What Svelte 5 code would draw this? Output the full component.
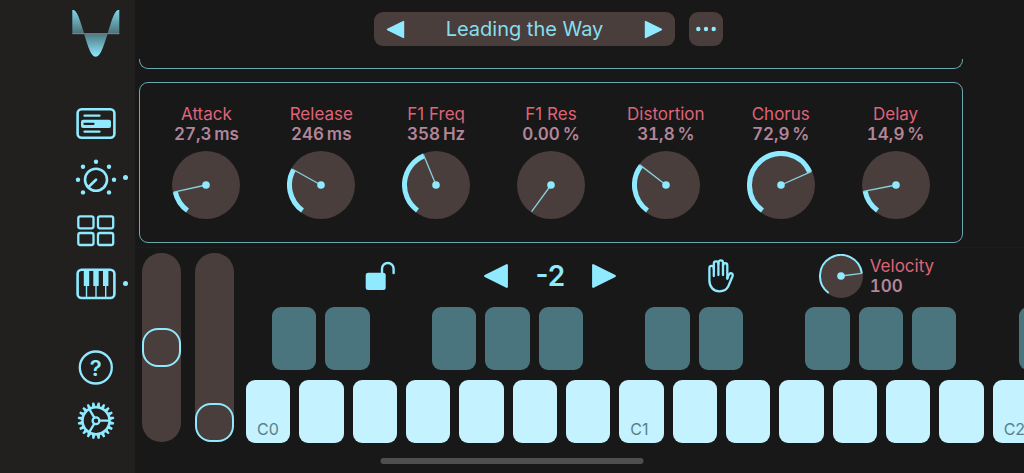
<script>
  let preset = $state('Leading the Way');
  let octave = $state(-2);
  let pitchBend = $state(50);
  let modWheel = $state(0);
  let velocity = $state(100);

  let knobs = $state([
    { name: 'Attack', value: '27,3', unit: 'ms', amount: 14.4 },
    { name: 'Release', value: '246', unit: 'ms', amount: 28.8 },
    { name: 'F1 Freq', value: '358', unit: 'Hz', amount: 42.2 },
    { name: 'F1 Res', value: '0.00', unit: '%', amount: 0 },
    { name: 'Distortion', value: '31,8', unit: '%', amount: 31.8 },
    { name: 'Chorus', value: '72,9', unit: '%', amount: 72.9 },
    { name: 'Delay', value: '14,9', unit: '%', amount: 14.9 }
  ]);

  const whiteKeys = Array.from({ length: 15 }, (_, i) => (i % 7 === 0 ? `C${i / 7}` : ''));
  // there is no black key after E and B
  const blackKeys = whiteKeys.map((_, i) => i % 7 !== 2 && i % 7 !== 6);
  const teeth = Array.from({ length: 20 }, (_, i) => i * 18);

  // knobs travel 288 degrees, starting at the lower left
  function point(fraction, radius, center) {
    const angle = ((216 + fraction * 288) * Math.PI) / 180;
    return [center + radius * Math.sin(angle), center - radius * Math.cos(angle)];
  }

  function arc(fraction, radius, center) {
    const [x1, y1] = point(0, radius, center);
    const [x2, y2] = point(fraction, radius, center);
    return `M${x1} ${y1}A${radius} ${radius} 0 ${fraction * 288 > 180 ? 1 : 0} 1 ${x2} ${y2}`;
  }
</script>

{#snippet dial(fraction, size, stroke)}
  {@const c = size / 2}
  {@const end = point(fraction, c - 1, c)}
  <svg width={size} height={size} viewBox="0 0 {size} {size}" aria-hidden="true">
    <circle cx={c} cy={c} r={c} fill="#4a3e3c" />
    {#if fraction > 0}
      <path d={arc(fraction, c - stroke / 2, c)} fill="none" stroke="#8feaff" stroke-width={stroke} />
    {/if}
    <line x1={c} y1={c} x2={end[0]} y2={end[1]} stroke="#86d3de" stroke-width="1.3" />
    <circle cx={c} cy={c} r="3.8" fill="#8feaff" />
  </svg>
{/snippet}

{#snippet left()}
  <svg viewBox="0 0 24 24" aria-hidden="true"><path d="M2 12 22 2V22Z" /></svg>
{/snippet}

{#snippet right()}
  <svg viewBox="0 0 24 24" aria-hidden="true"><path d="M22 12 2 2V22Z" /></svg>
{/snippet}

<div class="app">
  <nav class="sidebar">
    <svg class="logo" viewBox="0 0 48 48" aria-hidden="true">
      <defs>
        <linearGradient id="lobe" x1="0" y1="0" x2="0" y2="1">
          <stop offset="0" stop-color="#7ed6e8" />
          <stop offset="1" stop-color="#4b7078" />
        </linearGradient>
        <linearGradient id="trough" x1="0" y1="0" x2="0" y2="1">
          <stop offset="0" stop-color="#4d7780" />
          <stop offset="1" stop-color="#8feaff" />
        </linearGradient>
      </defs>
      <path d="M.3 24.7V1H2C6 3 9 15 12.300 24.700Z" fill="url(#lobe)" />
      <path d="M47.300 24.700V1H45.600C41.600 3 38.700 15 35.500 24.700Z" fill="url(#lobe)" />
      <path d="M12 24.700C15.500 35 18.500 47.700 23.800 47.700S32 35 35.700 24.700Z" fill="url(#trough)" />
      <path d="M.3 24.700H47.300" stroke="#8f9c9b" stroke-width=".8" />
    </svg>

    <div class="group views">
      <button aria-label="Presets">
        <svg viewBox="0 0 48 44">
          <rect x="5.600" y="7.300" width="36.800" height="28.500" rx="4" stroke-width="2.600" />
          <path d="M12.500 13.700H27.500M12.500 29.700H27.500" />
          <rect class="solid" x="9" y="17.700" width="30" height="8.400" rx="2" />
          <path d="M12.500 21.800H21.500" stroke="#21201f" />
        </svg>
      </button>
      <button class="active" aria-label="Controls">
        <svg viewBox="0 0 48 44">
          <circle cx="24" cy="24.700" r="11" stroke-width="2.600" />
          <path d="M24 24.700 17 31.500" stroke-width="2.600" />
          <g class="solid">
            <circle cx="6" cy="24.700" r="2.200" />
            <circle cx="11" cy="11.700" r="2.200" />
            <circle cx="24" cy="6.700" r="2.200" />
            <circle cx="37" cy="11.700" r="2.200" />
            <circle cx="42" cy="24.700" r="2.200" />
            <circle cx="11" cy="37.400" r="2.200" />
            <circle cx="37" cy="37.400" r="2.200" />
          </g>
        </svg>
      </button>
      <button aria-label="Pads">
        <svg viewBox="0 0 48 44">
          <rect x="6.300" y="8.300" width="15.200" height="12" rx="2" />
          <rect x="26" y="8.300" width="15.200" height="12" rx="2" />
          <rect x="6.300" y="25" width="15.200" height="12" rx="2" />
          <rect x="26" y="25" width="15.200" height="12" rx="2" />
        </svg>
      </button>
      <button class="active" aria-label="Keyboard">
        <svg viewBox="0 0 48 44">
          <rect x="5.600" y="8.700" width="36.800" height="28.300" rx="4" stroke-width="2.600" />
          <path class="solid" d="M11.800 9H17.200V25H11.800ZM21.300 9H26.700V25H21.300ZM31 9H36.400V25H31Z" />
          <path d="M14.500 25V36M24 25V36M33.700 25V36" stroke-width="1.400" />
        </svg>
      </button>
    </div>

    <div class="group">
      <button aria-label="Help">
        <svg viewBox="0 0 48 44">
          <circle cx="23.800" cy="21.500" r="16" />
          <text x="23.800" y="29.500" text-anchor="middle">?</text>
        </svg>
      </button>
      <button aria-label="Settings">
        <svg viewBox="0 0 48 44">
          <g transform="translate(24 21.7)">
            <circle r="13.500" stroke-width="2.500" />
            {#each teeth as angle}
              <path class="solid" d="M-1.800-14 -1-18.300H1L1.800-14Z" transform="rotate({angle + 9})" />
            {/each}
            <circle r="3.400" />
            <path d="M3.400 0H13M-1.700-3 -6.700-11.500M-1.700 3-6.700 11.500" />
          </g>
        </svg>
      </button>
    </div>
  </nav>

  <main>
    <header>
      <div class="preset">
        <button class="arrow" aria-label="Previous preset">{@render left()}</button>
        <span>{preset}</span>
        <button class="arrow" aria-label="Next preset">{@render right()}</button>
      </div>
      <button class="more" aria-label="More">
        <svg width="20" height="6" viewBox="0 0 20 6" aria-hidden="true">
          <circle cx="2.300" cy="3" r="2.200" />
          <circle cx="10" cy="3" r="2.200" />
          <circle cx="17.700" cy="3" r="2.200" />
        </svg>
      </button>
    </header>

    <section class="panels">
      <div class="panel previous"></div>
      <div class="panel knobs">
        {#each knobs as knob}
          <label class="knob">
            <span class="name">{knob.name}</span>
            <span class="value">{knob.value}&#8201;{knob.unit}</span>
            {@render dial(knob.amount / 100, 68, 5)}
            <input type="range" min="0" max="100" step="0.1" bind:value={knob.amount} />
          </label>
        {/each}
      </div>
    </section>

    <section class="play">
      <div class="wheels">
        <input type="range" aria-label="Pitch bend" bind:value={pitchBend} />
        <input type="range" aria-label="Modulation" bind:value={modWheel} />
      </div>

      <div class="keyboard">
        <div class="toolbar">
          <button aria-label="Unlock keyboard">
            <svg width="30" height="30" viewBox="0 0 30 30">
              <rect x=".7" y="11.700" width="20" height="17.300" rx="2.500" />
              <path
                d="M17 13V7.800a5.800 5.800 0 0 1 11.600 0V12"
                fill="none"
                stroke="#8feaff"
                stroke-width="2.400"
                stroke-linecap="round"
              />
            </svg>
          </button>
          <div class="octave">
            <button class="arrow" aria-label="Octave down" onclick={() => octave--}>{@render left()}</button>
            <output>{octave}</output>
            <button class="arrow" aria-label="Octave up" onclick={() => octave++}>{@render right()}</button>
          </div>
          <button aria-label="Hold">
            <svg class="hand" width="26" height="34" viewBox="0 0 26 34">
              <path d="M5.800 17V9a2.200 2.200 0 0 0-4.400 0V21.500C1.400 28 5.500 32.300 11.600 32.300c4.400 0 7.200-1.800 8.800-5.300l4-9.500c.6-1.500.3-2.600-.8-3.100-1.200-.5-2.200.2-2.800 1.400L19.300 19.500" />
              <path d="M5.800 10V4.700a2.300 2.300 0 0 1 4.600 0V16" />
              <path d="M10.400 5V3.600a2.300 2.300 0 0 1 4.600 0V16" />
              <path d="M15 7V6.400a2.150 2.150 0 0 1 4.300 0V19.500" />
            </svg>
          </button>
          <label class="velocity">
            {@render dial(velocity / 127, 44, 2)}
            <span>
              <span class="name">Velocity</span>
              <span class="value">{velocity}</span>
            </span>
            <input type="range" min="0" max="127" bind:value={velocity} />
          </label>
        </div>

        <div class="keys black">
          {#each blackKeys as present}
            {#if present}
              <button aria-label="Black key"></button>
            {:else}
              <span></span>
            {/if}
          {/each}
        </div>
        <div class="keys white">
          {#each whiteKeys as note}
            <button aria-label={note || 'White key'}>{note}</button>
          {/each}
        </div>
      </div>
    </section>
  </main>

  <div class="home-indicator"></div>
</div>

<style>
  :global(body) {
    background: #181818;
  }

  .app {
    position: relative;
    display: flex;
    min-height: 100vh;
    overflow: hidden;
    box-sizing: border-box;
    background: #181818;
    color: #86deef;
    font-family: Inter, "Liberation Sans", sans-serif;
  }

  button {
    display: flex;
    align-items: center;
    justify-content: center;
    padding: 0;
    border: none;
    background: none;
    color: inherit;
    font: inherit;
    fill: #8feaff;
    cursor: pointer;
  }

  svg {
    display: block;
  }

  .sidebar {
    flex: none;
    width: 135px;
    box-sizing: border-box;
    padding: 9px 15px 0 72px;
    background: #21201f;
  }

  .logo {
    width: 48px;
    height: 48px;
  }

  .group {
    display: flex;
    flex-direction: column;
    gap: 9px;
  }

  .views {
    margin: 45px 0 41px;
  }

  .group button {
    position: relative;
    width: 48px;
    height: 44px;
  }

  .group button svg {
    width: 48px;
    height: 44px;
    fill: none;
    stroke: #8feaff;
    stroke-width: 2.3;
    stroke-linecap: round;
  }

  .group .solid {
    fill: #8feaff;
    stroke: none;
  }

  .group text {
    fill: #8feaff;
    stroke: none;
    font-size: 22px;
    font-weight: 600;
  }

  .active::after {
    content: '';
    position: absolute;
    top: 20px;
    left: 51px;
    width: 5px;
    height: 5px;
    border-radius: 50%;
    background: #8feaff;
  }

  main {
    flex: 1;
    min-width: 0;
  }

  header {
    display: flex;
    justify-content: center;
    gap: 14px;
    padding: 12px 62px 13px 0;
  }

  .preset {
    display: flex;
    align-items: center;
    justify-content: space-between;
    width: 301px;
    height: 34px;
    box-sizing: border-box;
    padding: 0 12px;
    border-radius: 9px;
    background: #4a3e3c;
    font-size: 20px;
  }

  .arrow svg {
    width: 26px;
    height: 26px;
    stroke: #8feaff;
    stroke-width: 2;
    stroke-linejoin: round;
  }

  .preset .arrow svg {
    width: 19px;
    height: 19px;
  }

  .more {
    width: 34px;
    height: 34px;
    border-radius: 9px;
    background: #4a3e3c;
  }

  .panels {
    padding: 0 61px 4px 4px;
    border-bottom: 1px solid #1e1c1c;
  }

  .panel {
    border: 1px solid #6aa9ae;
    border-radius: 9px;
  }

  .previous {
    height: 9px;
    margin-bottom: 13px;
    border-top: none;
    border-top-left-radius: 0;
    border-top-right-radius: 0;
  }

  .knobs {
    display: grid;
    grid-template-columns: repeat(7, 1fr);
    padding: 21px 9px 23px;
  }

  .knob {
    position: relative;
    display: flex;
    flex-direction: column;
    align-items: center;
  }

  .name,
  .value {
    display: block;
    font-size: 17px;
    line-height: 20px;
    white-space: nowrap;
  }

  .name {
    color: #df6478;
  }

  .value {
    color: #b28598;
    font-weight: 600;
    font-variant-numeric: tabular-nums;
  }

  .knob svg {
    margin-top: 7px;
  }

  .knob input,
  .velocity input {
    position: absolute;
    inset: 0;
    width: 100%;
    height: 100%;
    margin: 0;
    opacity: 0;
    cursor: pointer;
  }

  .play {
    display: flex;
    gap: 12px;
    padding: 5px 0 30px 7px;
  }

  .wheels {
    display: flex;
    gap: 14px;
  }

  .wheels input {
    width: 39px;
    height: 189px;
    margin: 0;
    border-radius: 19px;
    background: #4a3e3c;
    appearance: none;
    writing-mode: vertical-lr;
    direction: rtl;
  }

  .wheels input::-webkit-slider-thumb {
    width: 39px;
    height: 39px;
    box-sizing: border-box;
    border: 2px solid #8feaff;
    border-radius: 16px;
    background: #4a3e3c;
    appearance: none;
  }

  .keyboard {
    flex: 1;
    min-width: 0;
  }

  .toolbar {
    display: grid;
    grid-template-columns: repeat(4, 1fr);
    align-items: center;
    height: 45px;
    margin-bottom: 9px;
    padding: 0 48px 0 49px;
  }

  .octave {
    display: flex;
    align-items: center;
    justify-content: center;
    gap: 16px;
  }

  .octave output {
    width: 50px;
    text-align: center;
    font-size: 28px;
    font-weight: 600;
    line-height: 32px;
    color: #8feaff;
  }

  .hand {
    fill: none;
    stroke: #8feaff;
    stroke-width: 2.3;
    stroke-linecap: round;
    stroke-linejoin: round;
  }

  .velocity {
    position: relative;
    display: flex;
    align-items: center;
    gap: 7px;
    margin-left: 13px;
  }

  /* the keyboard runs on past the right edge */
  .keys {
    display: grid;
    grid-template-columns: repeat(15, 1fr);
    gap: 9px;
    width: calc(100% + 13px);
    height: 63px;
  }

  .keys button {
    border-radius: 9px;
  }

  .black {
    margin: 0 0 10px 26px;
  }

  .black button {
    background: #4a747e;
  }

  .white button {
    align-items: flex-end;
    justify-content: flex-start;
    padding: 0 0 4px 11px;
    background: #c4f2ff;
    color: #54828c;
    font-size: 16px;
    line-height: 20px;
  }

  .home-indicator {
    position: absolute;
    bottom: 9px;
    left: 50%;
    width: 263px;
    height: 6px;
    border-radius: 3px;
    background: #4f4f4f;
    transform: translateX(-50%);
  }
</style>
